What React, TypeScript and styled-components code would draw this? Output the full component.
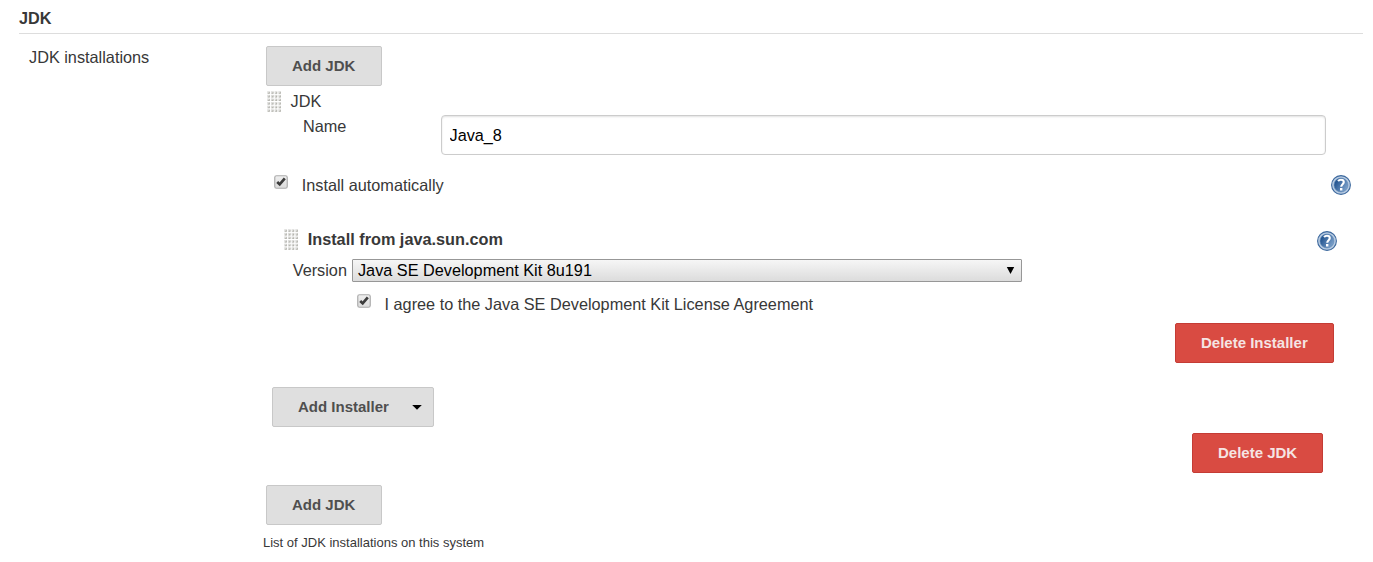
import React from "react";
import styled, { createGlobalStyle } from "styled-components";

const GlobalStyle = createGlobalStyle`
  * { box-sizing: border-box; }
  body {
    margin: 0;
    background: #fff;
    color: #383838;
    font-family: "Liberation Sans", Arial, sans-serif;
    font-size: 16.27px;
    line-height: 20px;
  }
`;

const Page = styled.main`
  min-height: 562px;
  padding: 8px 10px 0 19px;
`;

const SectionTitle = styled.h1`
  height: 26px;
  margin: 0;
  border-bottom: 1px solid #ddd;
  font-size: 16.25px;
  font-weight: bold;
  line-height: 21px;
`;

const Setting = styled.section`
  display: grid;
  grid-template-columns: 234px 1fr;
  padding-left: 10px;
  padding-top: 12px;
`;

const SettingLabel = styled.div`
  padding-top: 1px;
`;

const Content = styled.div`
  display: flex;
  flex-direction: column;
`;

const Row = styled.div<{ $h: number; $left?: number; $right?: number; $gap?: number }>`
  display: flex;
  align-items: flex-start;
  height: ${(p) => p.$h}px;
  padding-left: ${(p) => p.$left ?? 0}px;
  padding-right: ${(p) => p.$right ?? 0}px;
  gap: ${(p) => p.$gap ?? 0}px;
`;

const Label = styled.label<{ $top?: number; $w?: number; $bold?: boolean }>`
  flex: none;
  width: ${(p) => (p.$w ? `${p.$w}px` : "auto")};
  padding-top: ${(p) => p.$top ?? 0}px;
  font-weight: ${(p) => (p.$bold ? "bold" : "normal")};
  white-space: nowrap;
`;

const Button = styled.button<{ $danger?: boolean; $w: number }>`
  display: flex;
  align-items: center;
  justify-content: space-between;
  flex: none;
  width: ${(p) => p.$w}px;
  height: 40px;
  padding: 0 11px 0 25px;
  border: 1px solid ${(p) => (p.$danger ? "#c43c35" : "#c8c8c8")};
  border-radius: 2px;
  background: ${(p) => (p.$danger ? "#d94b42" : "#dfdfdf")};
  color: ${(p) => (p.$danger ? "#f5e4e3" : "#4f4f4f")};
  font: bold 15px/20px "Liberation Sans", Arial, sans-serif;
  white-space: nowrap;
`;

const TextInput = styled.input`
  flex: 1;
  min-width: 0;
  height: 40px;
  padding: 1px 8px 0 7.5px;
  border: 1px solid #ccc;
  border-radius: 4px;
  box-shadow: inset 0 1px 2px rgba(0, 0, 0, 0.12);
  background: #fff;
  color: #000;
  font: 16.25px "Liberation Sans", Arial, sans-serif;
`;

const Select = styled.div`
  display: flex;
  justify-content: space-between;
  width: 670px;
  height: 23px;
  padding: 0 6px 0 5px;
  border: 1px solid #979797;
  border-radius: 1px;
  background: linear-gradient(#f6f6f6, #dcdcdc);
  color: #000;
  font-size: 16.25px;
  line-height: 21px;
`;

const CheckBox = styled.span`
  display: flex;
  flex: none;
`;

const Spacer = styled.span`
  flex: 1;
`;

const HelpSlot = styled.span<{ $top?: number }>`
  display: flex;
  padding-top: ${(p) => p.$top ?? 0}px;
`;

const Note = styled.p`
  margin: 0;
  font-size: 13px;
  line-height: 16px;
`;

function Grip() {
  const dots: React.ReactElement[] = [];
  for (let y = 0; y < 6; y++) {
    for (let x = 0; x < 4; x++) {
      dots.push(
        <g key={`${x}-${y}`} transform={`translate(${x * 3.7 + 0.2} ${y * 3.6 + 0.2})`}>
          <rect x="0" y="0" width="2.6" height="2.6" fill="#dededc" />
          <path d="M2.6 0.3 V2.6 H0.3 Z" fill="#b4b4ae" />
        </g>
      );
    }
  }
  return (
    <svg width="14" height="21" viewBox="0 0 14 21">
      {dots}
    </svg>
  );
}

function Checked() {
  return (
    <CheckBox role="checkbox" aria-checked="true">
      <svg width="14" height="14" viewBox="0 0 14 14">
        <defs>
          <linearGradient id="box" x1="0" y1="0" x2="0" y2="1">
            <stop offset="0" stopColor="#efefef" />
            <stop offset="1" stopColor="#dcdcdc" />
          </linearGradient>
        </defs>
        <rect x="0.75" y="0.75" width="12.5" height="12.5" rx="1.8" fill="url(#box)" stroke="#acacac" strokeWidth="1.2" />
        <path d="M3.2 7 L5.7 9.4 L10.8 3.4" fill="none" stroke="#3c3c3c" strokeWidth="2.7" />
      </svg>
    </CheckBox>
  );
}

function Help() {
  return (
    <svg width="20" height="20" viewBox="0 0 20 20">
      <defs>
        <linearGradient id="disc" x1="0" y1="0" x2="1" y2="0.6">
          <stop offset="0.1" stopColor="#174a88" />
          <stop offset="1" stopColor="#7a9fc9" />
        </linearGradient>
      </defs>
      <circle cx="10" cy="10" r="9.4" fill="#b9cce2" stroke="#3c689d" strokeWidth="1.1" />
      <circle cx="10" cy="10" r="7" fill="url(#disc)" stroke="#5d86b6" strokeWidth="0.6" />
      <path d="M7.1 6.1 C7.8 5.1 8.7 4.8 9.9 4.8 C11.8 4.8 12.8 5.7 12.8 7.1 C12.8 9.2 10.2 9.2 10.2 11.8" fill="none" stroke="#fff" strokeWidth="2.1" />
      <rect x="9" y="13" width="2.4" height="2.5" fill="#fff" />
    </svg>
  );
}

export default function App() {
  return (
    <>
      <GlobalStyle />
      <Page>
        <SectionTitle>JDK</SectionTitle>
        <Setting>
          <SettingLabel>JDK installations</SettingLabel>
          <Content>
            <Row $h={45} $left={3}>
              <Button $w={116}>Add JDK</Button>
            </Row>
            <Row $h={24} $left={4} $gap={9.5}>
              <Grip />
              <Label>JDK</Label>
            </Row>
            <Row $h={60} $left={40} $right={37}>
              <Label $w={138} $top={1}>Name</Label>
              <TextInput defaultValue="Java_8" />
            </Row>
            <Row $h={54} $left={11} $right={12} $gap={13.7}>
              <Checked />
              <Label>Install automatically</Label>
              <Spacer />
              <HelpSlot><Help /></HelpSlot>
            </Row>
            <Row $h={30} $left={21} $right={26} $gap={9.7}>
              <Grip />
              <Label $bold>Install from java.sun.com</Label>
              <Spacer />
              <HelpSlot $top={2}><Help /></HelpSlot>
            </Row>
            <Row $h={35} $left={29.7}>
              <Label $w={59.3} $top={1}>Version</Label>
              <Select>
                <span>Java SE Development Kit 8u191</span>
                <svg width="9" height="21" viewBox="0 0 9 21">
                  <path d="M0.8 7 H8.2 L4.5 14 Z" fill="#000" />
                </svg>
              </Select>
            </Row>
            <Row $h={29} $left={94} $gap={13.5}>
              <Checked />
              <Label>I agree to the Java SE Development Kit License Agreement</Label>
            </Row>
            <Row $h={64} $right={29}>
              <Spacer />
              <Button $danger $w={159}>Delete Installer</Button>
            </Row>
            <Row $h={46} $left={9}>
              <Button $w={162}>
                Add Installer
                <svg width="10" height="6" viewBox="0 0 10 6">
                  <path d="M0.2 1 H9.8 L5 5.8 Z" fill="#000" />
                </svg>
              </Button>
            </Row>
            <Row $h={52} $right={40}>
              <Spacer />
              <Button $danger $w={131}>Delete JDK</Button>
            </Row>
            <Row $h={50} $left={3}>
              <Button $w={116}>Add JDK</Button>
            </Row>
            <Note>List of JDK installations on this system</Note>
          </Content>
        </Setting>
      </Page>
    </>
  );
}
